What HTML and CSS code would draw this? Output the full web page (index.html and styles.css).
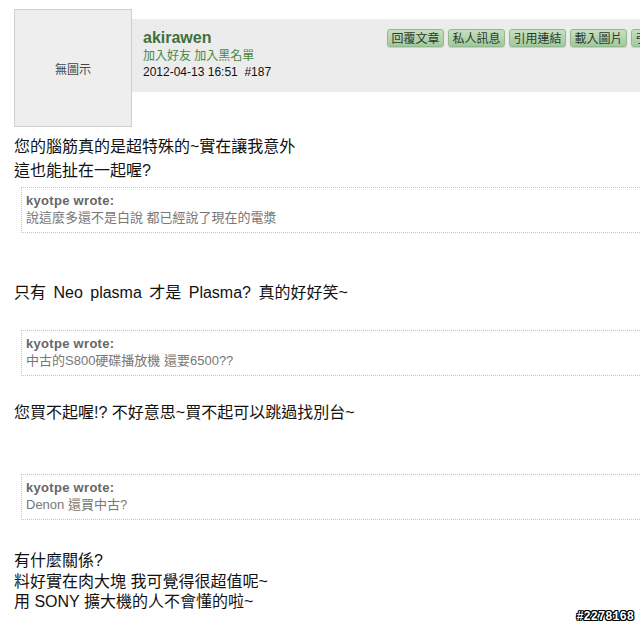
FILE: index.html
```html
<!DOCTYPE html>
<html lang="zh-Hant">
<head>
<meta charset="utf-8">
<link rel="stylesheet" href="styles.css">
</head>
<body>
<div class="page">
  <div class="post-head">
    <div class="avatar">無圖示</div>
    <div class="bar">
      <div class="info">
        <div class="name">akirawen</div>
        <div class="links"><a>加入好友</a> <a>加入黑名單</a></div>
        <div class="date">2012-04-13 16:51&nbsp;&nbsp;#187</div>
      </div>
      <div class="buttons">
        <span class="btn">回覆文章</span>
        <span class="btn">私人訊息</span>
        <span class="btn">引用連結</span>
        <span class="btn">載入圖片</span>
        <span class="btn">引用回覆</span>
      </div>
    </div>
  </div>
  <div class="content">
    <div class="text first">您的腦筋真的是超特殊的~實在讓我意外<br>這也能扯在一起喔?</div>
    <div class="quote q1">
      <div class="qtitle">kyotpe wrote:</div>
      <div class="qtext">說這麼多還不是白說 都已經說了現在的電漿</div>
    </div>
    <div class="text t2">只有 Neo plasma 才是 Plasma? 真的好好笑~</div>
    <div class="quote q2">
      <div class="qtitle">kyotpe wrote:</div>
      <div class="qtext">中古的S800硬碟播放機 還要6500??</div>
    </div>
    <div class="text t3">您買不起喔!? 不好意思~買不起可以跳過找別台~</div>
    <div class="quote q3">
      <div class="qtitle">kyotpe wrote:</div>
      <div class="qtext">Denon 還買中古?</div>
    </div>
    <div class="text t4">有什麼關係?<br>料好實在肉大塊 我可覺得很超值呢~<br>用 SONY 擴大機的人不會懂的啦~</div>
  </div>
</div>
<div class="watermark">#2278168</div>
</body>
</html>
```

FILE: styles.css
```css
html, body {
  margin: 0;
  padding: 0;
  background: #fff;
  overflow: hidden;
}
body {
  width: 640px;
  height: 626px;
  position: relative;
  font-family: "Liberation Sans", Arial, "Noto Sans CJK TC", sans-serif;
  color: #111;
}
.page {
  padding-left: 14px;
}
.post-head {
  display: flex;
  align-items: flex-start;
  padding-top: 9px;
}
.avatar {
  flex: none;
  width: 116px;
  height: 116px;
  border: 1px solid #cfcfcf;
  background: #eeeeee;
  display: flex;
  align-items: center;
  justify-content: center;
  font-size: 12px;
  color: #444;
}
.bar {
  flex: 1;
  min-width: 0;
  margin-top: 10px;
  height: 73px;
  background: #ececec;
  display: flex;
  align-items: flex-start;
  overflow: hidden;
}
.info {
  flex: none;
  padding-left: 11px;
  padding-top: 9px;
  box-sizing: border-box;
  width: 255px;
}
.name {
  font-size: 16px;
  font-weight: bold;
  color: #3e6f3e;
  line-height: 19px;
}
.links {
  font-size: 12px;
  line-height: 16px;
  color: #4a873e;
  margin-top: 1px;
}
.links a {
  color: #4a873e;
  text-decoration: none;
}
.date {
  font-size: 12px;
  line-height: 16px;
  color: #111;
}
.buttons {
  flex: none;
  display: flex;
  gap: 4px;
  margin-top: 10px;
}
.btn {
  flex: none;
  box-sizing: border-box;
  width: 57px;
  height: 18px;
  border: 1px solid #93b98e;
  border-radius: 3px;
  background: linear-gradient(#c6dfbf, #a3c89c);
  box-shadow: 0 1px 1px rgba(0,0,0,0.15);
  font-size: 12px;
  line-height: 16px;
  text-align: center;
  color: #2c3a2c;
  font-family: "Noto Sans CJK TC", sans-serif;
}
.content {
  margin-top: 8px;
}
.text {
  font-size: 16px;
  line-height: 20px;
  color: #111;
  white-space: nowrap;
}
.text.first {
  line-height: 24px;
}
.quote {
  margin-left: 7px;
  margin-right: -40px;
  border: 1px dotted #c4c4c4;
  padding: 4px 4px 6px 4px;
  line-height: 17px;
  font-size: 13px;
}
.qtitle {
  font-weight: bold;
  color: #666;
  letter-spacing: 0.3px;
}
.qtext {
  color: #777;
  white-space: nowrap;
}
.q1 { margin-top: 4px; }
.t2 { margin-top: 50px; word-spacing: 3px; }
.q2 { margin-top: 27px; }
.t3 { margin-top: 27px; }
.q3 { margin-top: 51px; }
.t4 { margin-top: 31px; line-height: 20.5px; }
.watermark {
  position: absolute;
  right: 6px;
  bottom: 2px;
  font-family: "Liberation Mono", monospace;
  font-weight: bold;
  font-size: 12px;
  color: #fff;
  text-shadow: 1px 0 0 #000, -1px 0 0 #000, 0 1px 0 #000, 0 -1px 0 #000, 1px 1px 0 #000, -1px -1px 0 #000, 1px -1px 0 #000, -1px 1px 0 #000;
}
```
